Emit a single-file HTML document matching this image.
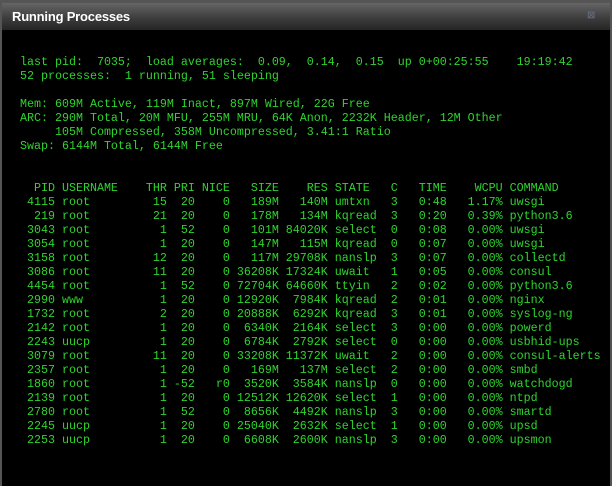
<!DOCTYPE html>
<html><head><meta charset="utf-8"><style>
html,body{margin:0;padding:0;background:#000;width:612px;height:486px;overflow:hidden}
.win{position:absolute;left:0;top:0;width:612px;height:486px;background:#555;}
.title{position:absolute;left:2px;top:3px;width:608px;height:27px;background:linear-gradient(#656565,#3a3a3a 60%,#262626);}
.title span{position:absolute;left:10px;top:6px;color:#fff;font:bold 13px "Liberation Sans",sans-serif;letter-spacing:-0.2px}
.x{position:absolute;right:14px;top:8px;width:9px;height:9px;color:#5d6473;font:bold 10px "Liberation Sans",sans-serif;line-height:9px}
.body{position:absolute;left:2px;top:30px;width:608px;height:456px;background:#000}
pre{position:absolute;left:20px;top:55px;margin:0;font-family:"Liberation Mono",monospace;font-size:11.67px;line-height:14px;color:#2fd42f}
</style></head><body>
<div class="win"><div class="title"><span>Running Processes</span><div class="x">⊠</div></div><div class="body"></div></div>
<pre>last pid:  7035;  load averages:  0.09,  0.14,  0.15  up 0+00:25:55    19:19:42
52 processes:  1 running, 51 sleeping

Mem: 609M Active, 119M Inact, 897M Wired, 22G Free
ARC: 290M Total, 20M MFU, 255M MRU, 64K Anon, 2232K Header, 12M Other
     105M Compressed, 358M Uncompressed, 3.41:1 Ratio
Swap: 6144M Total, 6144M Free


  PID USERNAME    THR PRI NICE   SIZE    RES STATE   C   TIME    WCPU COMMAND
 4115 root         15  20    0   189M   140M umtxn   3   0:48   1.17% uwsgi
  219 root         21  20    0   178M   134M kqread  3   0:20   0.39% python3.6
 3043 root          1  52    0   101M 84020K select  0   0:08   0.00% uwsgi
 3054 root          1  20    0   147M   115M kqread  0   0:07   0.00% uwsgi
 3158 root         12  20    0   117M 29708K nanslp  3   0:07   0.00% collectd
 3086 root         11  20    0 36208K 17324K uwait   1   0:05   0.00% consul
 4454 root          1  52    0 72704K 64660K ttyin   2   0:02   0.00% python3.6
 2990 www           1  20    0 12920K  7984K kqread  2   0:01   0.00% nginx
 1732 root          2  20    0 20888K  6292K kqread  3   0:01   0.00% syslog-ng
 2142 root          1  20    0  6340K  2164K select  3   0:00   0.00% powerd
 2243 uucp          1  20    0  6784K  2792K select  0   0:00   0.00% usbhid-ups
 3079 root         11  20    0 33208K 11372K uwait   2   0:00   0.00% consul-alerts
 2357 root          1  20    0   169M   137M select  2   0:00   0.00% smbd
 1860 root          1 -52   r0  3520K  3584K nanslp  0   0:00   0.00% watchdogd
 2139 root          1  20    0 12512K 12620K select  1   0:00   0.00% ntpd
 2780 root          1  52    0  8656K  4492K nanslp  3   0:00   0.00% smartd
 2245 uucp          1  20    0 25040K  2632K select  1   0:00   0.00% upsd
 2253 uucp          1  20    0  6608K  2600K nanslp  3   0:00   0.00% upsmon</pre>
</body></html>
